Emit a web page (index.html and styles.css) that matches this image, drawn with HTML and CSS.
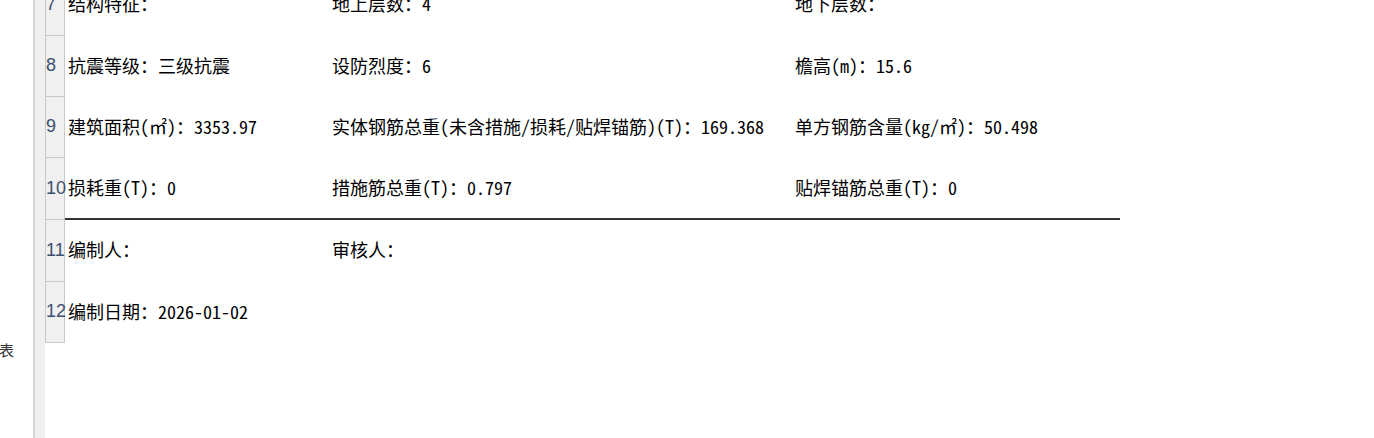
FILE: index.html
```html
<!DOCTYPE html>
<html lang="zh-CN">
<head>
<meta charset="utf-8">
<title>报表</title>
<link rel="stylesheet" href="styles.css">
</head>
<body>
<div class="app">
  <aside class="side"><span class="side-label">表</span></aside>
  <div class="divider"></div>
  <div class="gutter"></div>
  <div class="sheet">
    <div class="row">
      <div class="rh">7</div>
      <div class="c">结构特征：</div>
      <div class="c">地上层数：4</div>
      <div class="c">地下层数：</div>
    </div>
    <div class="row">
      <div class="rh">8</div>
      <div class="c">抗震等级：三级抗震</div>
      <div class="c">设防烈度：6</div>
      <div class="c">檐高(m)：15.6</div>
    </div>
    <div class="row">
      <div class="rh">9</div>
      <div class="c">建筑面积(㎡)：3353.97</div>
      <div class="c">实体钢筋总重(未含措施/损耗/贴焊锚筋)(T)：169.368</div>
      <div class="c">单方钢筋含量(kg/㎡)：50.498</div>
    </div>
    <div class="row row-rule">
      <div class="rh">10</div>
      <div class="c">损耗重(T)：0</div>
      <div class="c">措施筋总重(T)：0.797</div>
      <div class="c">贴焊锚筋总重(T)：0</div>
    </div>
    <div class="row">
      <div class="rh">11</div>
      <div class="c">编制人：</div>
      <div class="c">审核人：</div>
      <div class="c"></div>
    </div>
    <div class="row last">
      <div class="rh">12</div>
      <div class="c">编制日期：2026-01-02</div>
      <div class="c"></div>
      <div class="c"></div>
    </div>
  </div>
</div>
</body>
</html>
```

FILE: styles.css
```css
html, body {
  margin: 0;
  padding: 0;
  background: #ffffff;
  overflow: hidden;
}
.app {
  display: flex;
  height: 438px;
  width: 1374px;
}
.side {
  width: 33px;
  flex: none;
  display: flex;
  flex-direction: column;
  padding-top: 340px;
  box-sizing: border-box;
  overflow: hidden;
}
.side-label {
  font-family: "Noto Sans CJK SC", sans-serif;
  font-size: 15px;
  line-height: 20px;
  color: #333;
  margin-left: -1px;
}
.divider {
  width: 2px;
  flex: none;
  background: #d6d6d6;
}
.gutter {
  width: 10px;
  flex: none;
  background: #f0f0f0;
}
.sheet {
  flex: none;
  margin-top: -26px;
  display: flex;
  flex-direction: column;
  align-self: flex-start;
}
.row {
  display: grid;
  grid-template-columns: 20px 264px 463px 328px;
  height: 62px;
}
.row:nth-child(2), .row:nth-child(3), .row:nth-child(6) {
  height: 61px;
}
.rh {
  box-sizing: border-box;
  background: #f0f0f0;
  border-left: 1px solid #c9c9c9;
  border-right: 1px solid #c9c9c9;
  border-bottom: 1px solid #c9c9c9;
  font-family: "Liberation Sans", "Noto Sans", sans-serif;
  font-size: 18px;
  color: #3d4f6e;
  display: flex;
  align-items: center;
  justify-content: flex-end;
  white-space: nowrap;
  overflow: visible;
  direction: rtl;
  padding-bottom: 1px;
}
.c {
  box-sizing: border-box;
  padding-left: 3px;
  display: flex;
  align-items: center;
  font-family: "Noto Sans Mono CJK SC", "Noto Sans CJK SC", monospace;
  font-size: 18px;
  color: #000;
  white-space: nowrap;
  padding-bottom: 4px;
}
.row-rule .c {
  border-bottom: 2px solid #333;
  padding-bottom: 2px;
}
```
